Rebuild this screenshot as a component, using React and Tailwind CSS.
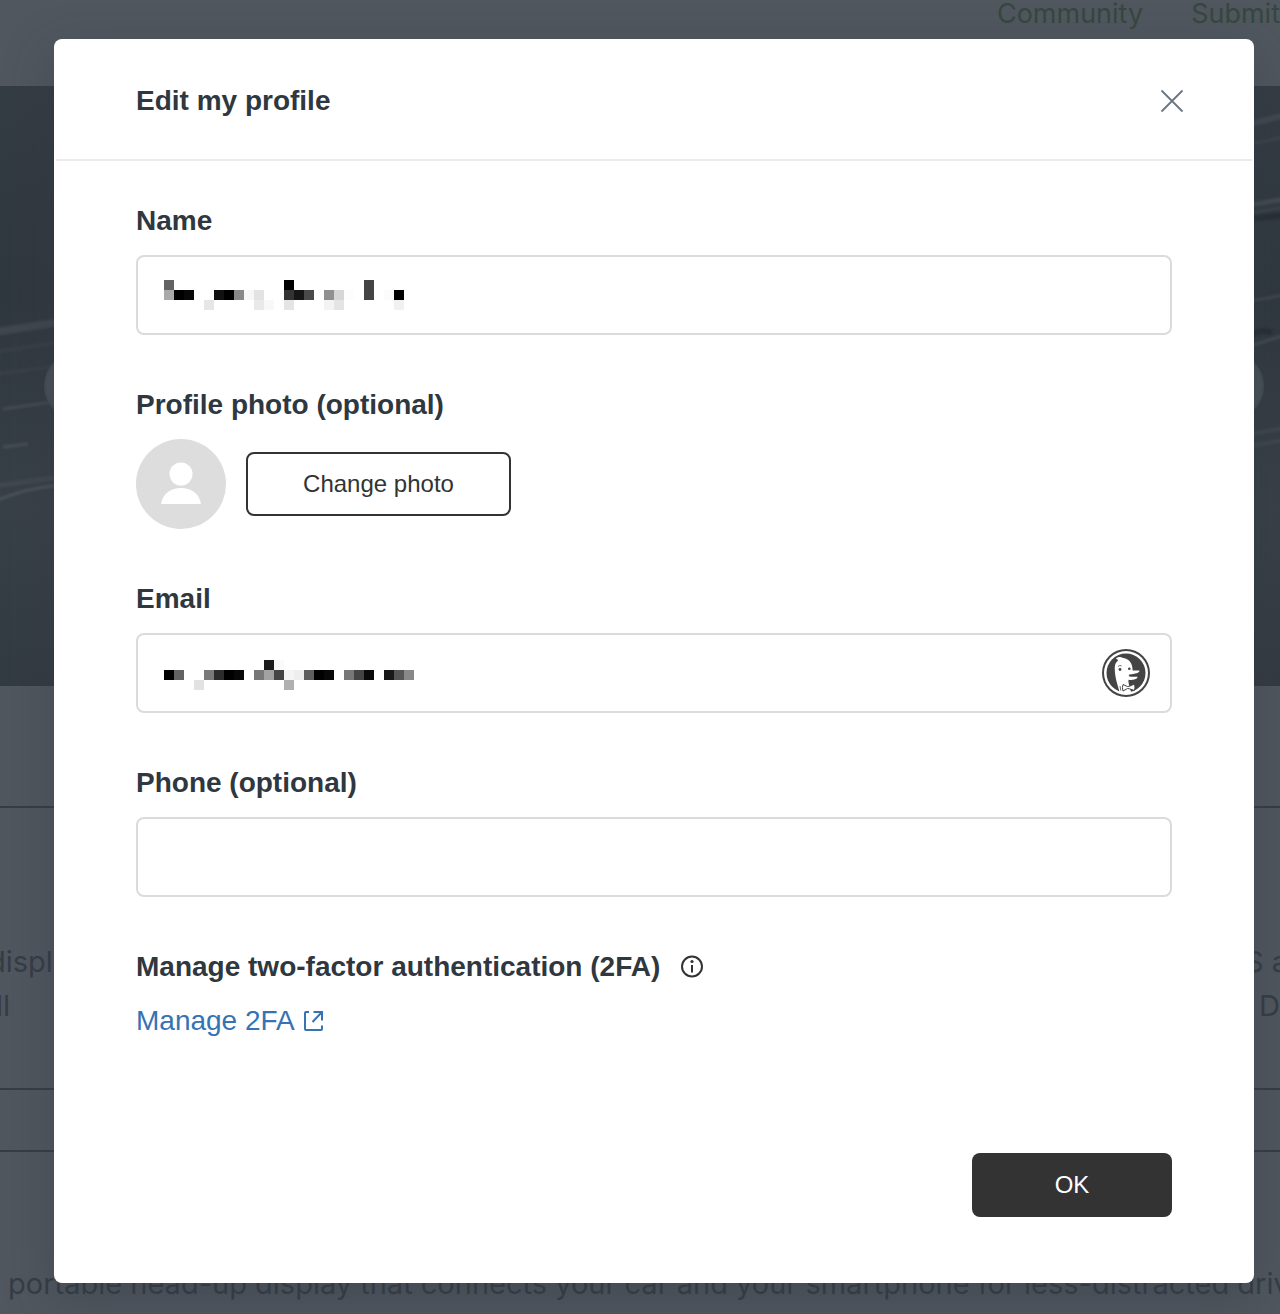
import React from "react";

// [column, row, fill] on a grid of 10px cells
const NAME_CELLS = [
  [0, 0, "#636363"], [12, 0, "#000"], [20, 0, "#444"],
  [0, 1, "#a9a9a9"], [1, 1, "#000"], [2, 1, "#080808"], [5, 1, "#111"],
  [6, 1, "#000"], [7, 1, "#888"], [8, 1, "#f7f7f7"], [9, 1, "#e3e3e3"],
  [12, 1, "#333"], [13, 1, "#161616"], [14, 1, "#4a4a4a"], [16, 1, "#909090"],
  [17, 1, "#d6d6d6"], [18, 1, "#fdfdfd"], [20, 1, "#444"], [22, 1, "#fcfcfc"],
  [23, 1, "#000"],
  [4, 2, "#e6e6e6"], [9, 2, "#e9e9e9"], [10, 2, "#f8f8f8"], [12, 2, "#e4e4e4"],
  [16, 2, "#f3f3f3"], [17, 2, "#e4e4e4"], [23, 2, "#f1f1f1"],
];

const EMAIL_CELLS = [
  [10, 0, "#1c1c1c"], [11, 0, "#fafafa"],
  [0, 1, "#000"], [1, 1, "#636363"], [4, 1, "#7a7a7a"], [5, 1, "#2c2c2c"],
  [6, 1, "#000"], [7, 1, "#080808"], [9, 1, "#777"], [10, 1, "#a2a2a2"],
  [11, 1, "#444"], [12, 1, "#f4f4f4"], [13, 1, "#eee"], [14, 1, "#5e5e5e"],
  [15, 1, "#000"], [16, 1, "#080808"], [18, 1, "#777"], [19, 1, "#444"],
  [20, 1, "#0a0a0a"], [22, 1, "#181818"], [23, 1, "#555"], [24, 1, "#888"],
  [3, 2, "#e2e2e2"], [12, 2, "#b0b0b0"],
];

const Mosaic = ({ cells, className }) => (
  <svg
    width="250"
    height="30"
    shapeRendering="crispEdges"
    className={`pointer-events-none absolute left-7 ${className}`}
    aria-hidden="true"
  >
    {cells.map(([x, y, fill]) => (
      <rect key={`${x}-${y}`} x={x * 10} y={y * 10} width="10" height="10" fill={fill} />
    ))}
  </svg>
);

const DuckIcon = ({ className }) => (
  <svg width="48" height="48" viewBox="0 0 48 48" className={className} aria-hidden="true">
    <defs>
      <clipPath id="duck-disc">
        <circle cx="24" cy="24" r="20.500" />
      </clipPath>
    </defs>
    <circle cx="24" cy="24" r="24" fill="#444" />
    <circle cx="24" cy="24" r="22" fill="#fff" />
    <circle cx="24" cy="24" r="19.500" fill="#444" />
    <g clipPath="url(#duck-disc)">
      <path
        d="M14 9.500 C16 7.500 19 7.500 21 9 C26 9.500 29.500 13 30.300 18 L30.600 21.500 C33 21.800 35.500 21.200 37.500 21.800 C37.800 23.600 33 25.200 27.500 25.400 C26.500 26 26.500 27 27.500 27.400 C30 28 33 27.400 35.500 27.800 C36 29.600 31.500 31.600 26.500 30.800 C26 34 28 38 29.500 45 H18 C16.500 38 13 30 12.800 21 C12.700 16 13.500 13.500 16 11.800 C15.800 10.800 15 10.200 14 9.500 Z"
        fill="#fff"
      />
      <circle cx="18" cy="20.500" r="1.400" fill="#444" />
      <circle cx="27.300" cy="19.800" r="1.300" fill="#444" />
      <path d="M16 17.500 Q17.500 16 19.500 16.800" fill="none" stroke="#444" strokeWidth="0.8" />
      <path
        d="M25.500 37.500 L21 35.500 Q19.800 38.500 21 42 L25.500 39.500 L27.500 39.800 L32.500 41.500 Q33.500 38 32.500 35 L28 37 Z"
        fill="#fff"
        stroke="#444"
        strokeWidth="1"
      />
      <path d="M18 37 L18.800 41.500" stroke="#444" strokeWidth="0.8" />
    </g>
  </svg>
);

const Field = ({ id, label, type = "text", children }) => (
  <div>
    <label htmlFor={id} className="block text-[28px] leading-9 font-bold">
      {label}
    </label>
    <div className="relative mt-4">
      <input
        id={id}
        type={type}
        className="block h-20 w-full rounded-lg border-2 border-[#d9dcdf] bg-white px-6 text-[28px] outline-none"
      />
      {children}
    </div>
  </div>
);

const HeroPhoto = () => (
  <svg
    className="block h-[600px] w-full"
    viewBox="0 0 1280 600"
    preserveAspectRatio="none"
    aria-hidden="true"
  >
    <defs>
      <linearGradient id="hero" x1="0" y1="0" x2="0" y2="1">
        <stop offset="0" stopColor="#343c44" />
        <stop offset="0.35" stopColor="#30383f" />
        <stop offset="0.46" stopColor="#333b42" />
        <stop offset="0.7" stopColor="#394148" />
        <stop offset="1" stopColor="#333b42" />
      </linearGradient>
      <filter id="soft" x="-10%" y="-10%" width="120%" height="120%">
        <feGaussianBlur stdDeviation="1" />
      </filter>
    </defs>
    <rect width="1280" height="600" fill="url(#hero)" />
    <g filter="url(#soft)" fill="none" stroke="#4a5259">
      <path d="M-5 246 L60 236" strokeWidth="8" strokeOpacity="0.55" />
      <path d="M-5 266 L60 256M-5 288 L60 280" strokeWidth="4" strokeOpacity="0.2" />
      <path d="M3 323 L60 315" strokeWidth="3" strokeOpacity="0.7" />
      <path d="M3 361 L28 358" strokeWidth="3" strokeOpacity="0.8" />
      <path d="M-5 400 L60 391" strokeWidth="5" strokeOpacity="0.45" />
      <path d="M-5 415 C20 405 35 402 60 399" strokeWidth="3" />
      <path d="M1250 38 L1285 29" strokeWidth="6" strokeOpacity="0.6" />
      <path d="M1250 58 L1285 51" strokeWidth="3" strokeOpacity="0.4" />
      <path d="M1250 119 L1285 113" strokeWidth="5" strokeOpacity="0.7" />
      <path d="M1250 127 L1285 121" strokeWidth="2" strokeOpacity="0.6" />
      <path d="M1250 215 L1285 209" strokeWidth="3" strokeOpacity="0.6" />
      <path d="M1250 260 L1285 249" strokeWidth="3" strokeOpacity="0.7" />
      <path d="M1250 348 L1285 342M1250 360 L1285 354" strokeWidth="4" strokeOpacity="0.45" />
      <path d="M1250 133 L1285 129" stroke="#282f36" strokeWidth="6" />
      <path d="M1250 250 Q1262 242 1272 247" stroke="#282f36" strokeWidth="6" />
    </g>
    <g fill="#495159" stroke="#444c54" strokeWidth="2">
      <circle cx="78" cy="300" r="33" />
      <circle cx="1230" cy="300" r="33" />
    </g>
  </svg>
);

const PageBehind = () => (
  <div
    className="absolute inset-0 overflow-hidden bg-[#50575f] font-[Inter,sans-serif] text-[29px] leading-[44px] text-[#353d45]"
    aria-hidden="true"
  >
    <nav className="flex h-[86px] items-start justify-end gap-12 text-[27px] leading-7 text-[#36473f]">
      <span>Community</span>
      <span>Submit</span>
    </nav>
    <HeroPhoto />
    <div className="h-[120px]" />
    <div className="flex h-[284px] items-center justify-between border-y-2 border-[#353d45] whitespace-nowrap">
      <p className="-ml-3 pt-[72px]">
        displ
        <br />
        <span className="pl-2">ll</span>
      </p>
      <p className="-mr-2 pt-[72px] text-right">
        S a
        <br />
        <span className="pr-2">D</span>
      </p>
    </div>
    <div className="h-[62px] border-b-2 border-[#353d45]" />
    <p className="pt-[110px] pl-2 whitespace-nowrap">
      portable head-up display that connects your car and your smartphone for less-distracted driv
    </p>
  </div>
);

const EditProfileModal = () => (
  <div
    role="dialog"
    aria-modal="true"
    aria-labelledby="dialog-title"
    className="relative rounded-lg bg-white text-[#2f373f] shadow-[0_16px_48px_rgba(50,54,66,0.4)]"
  >
    <header className="mx-0.5 flex h-[122px] items-center justify-between border-b-2 border-[#ebebeb] pt-1 pr-[68px] pl-20">
      <h2 id="dialog-title" className="text-[28px] leading-9 font-bold">
        Edit my profile
      </h2>
      <button type="button" aria-label="Close">
        <svg width="24" height="24" viewBox="0 0 24 24" fill="none" stroke="#6b7581" strokeWidth="1.8">
          <path d="M1.500 1.500 L22.500 22.500 M22.500 1.500 L1.500 22.500" />
        </svg>
      </button>
    </header>

    <form className="px-[82px] pt-[42px] pb-[66px]">
      <div className="flex flex-col gap-[52px]">
        <Field id="name" label="Name">
          <Mosaic cells={NAME_CELLS} className="top-[25px]" />
        </Field>

        <div>
          <h3 className="text-[28px] leading-9 font-bold">Profile photo (optional)</h3>
          <div className="mt-4 flex items-center gap-5">
            <svg width="90" height="90" viewBox="0 0 90 90" aria-hidden="true">
              <circle cx="45" cy="45" r="45" fill="#ddd" />
              <circle cx="45" cy="35" r="11.500" fill="#fff" />
              <path d="M25 65 C27 54 35 49 45 49 C55 49 63 54 65 65 Z" fill="#fff" />
            </svg>
            <button
              type="button"
              className="h-16 w-[265px] rounded-lg border-2 border-[#333] text-2xl text-[#333]"
            >
              Change photo
            </button>
          </div>
        </div>

        <Field id="email" label="Email" type="email">
          <Mosaic cells={EMAIL_CELLS} className="top-[27px]" />
          <DuckIcon className="absolute top-4 right-[22px]" />
        </Field>

        <Field id="phone" label="Phone (optional)" type="tel" />

        <div>
          <div className="flex items-center gap-5">
            <h3 className="text-[28px] leading-9 font-bold">Manage two-factor authentication (2FA)</h3>
            <svg width="24" height="24" viewBox="0 0 24 24" fill="none" stroke="#333" strokeWidth="2">
              <circle cx="12" cy="11.500" r="10" />
              <path d="M12 10 V17.500" />
              <circle cx="12" cy="6.500" r="1.600" fill="#333" stroke="none" />
            </svg>
          </div>
          <a href="#2fa" className="mt-[18px] inline-flex items-center gap-2 text-[28px] leading-9 text-[#3573b5]">
            Manage 2FA
            <svg width="22" height="22" viewBox="0 0 22 22" fill="none" stroke="currentColor" strokeWidth="2">
              <path d="M6 2 H3 Q2 2 2 3 V19 Q2 20 3 20 H18 Q19 20 19 19 V15.500" />
              <path d="M10.500 2 H19 V10.500 M19 2 L9.500 12" />
            </svg>
          </a>
        </div>
      </div>

      <div className="mt-[114px] flex justify-end">
        <button type="submit" className="h-16 w-[200px] rounded-lg bg-[#333] text-2xl text-white">
          OK
        </button>
      </div>
    </form>
  </div>
);

export default function App() {
  return (
    <div className="relative overflow-hidden pt-[39px] pr-[26px] pb-[31px] pl-[54px] font-['Liberation_Sans',Arial,sans-serif]">
      <PageBehind />
      <EditProfileModal />
    </div>
  );
}
